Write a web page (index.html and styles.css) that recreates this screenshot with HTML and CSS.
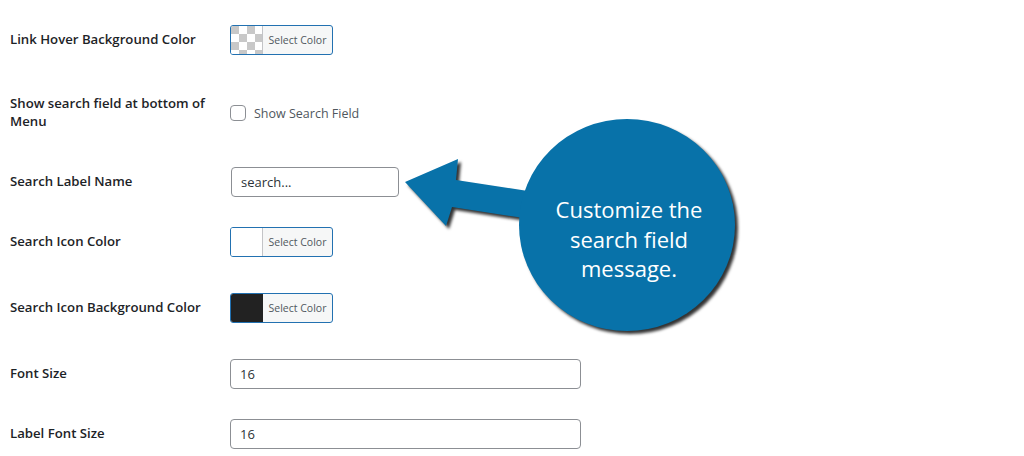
FILE: index.html
```
<!DOCTYPE html>
<html>
<head>
<meta charset="utf-8">
<title>Menu Settings</title>
<link rel="stylesheet" href="styles.css">
</head>
<body>
<div class="form">
  <div class="row color-row first">
    <div class="label">Link Hover Background Color</div>
    <button class="picker"><span class="swatch checker"></span><span class="pick-text">Select Color</span></button>
  </div>
  <div class="row">
    <div class="label">Show search field at bottom of Menu</div>
    <label class="check"><span class="box"></span>Show Search Field</label>
  </div>
  <div class="row text-row">
    <div class="label">Search Label Name</div>
    <div class="input short">search...</div>
  </div>
  <div class="row color-row">
    <div class="label">Search Icon Color</div>
    <button class="picker"><span class="swatch white"></span><span class="pick-text">Select Color</span></button>
  </div>
  <div class="row color-row">
    <div class="label">Search Icon Background Color</div>
    <button class="picker"><span class="swatch dark"></span><span class="pick-text">Select Color</span></button>
  </div>
  <div class="row text-row">
    <div class="label">Font Size</div>
    <div class="input wide">16</div>
  </div>
  <div class="row text-row last">
    <div class="label">Label Font Size</div>
    <div class="input wide">16</div>
  </div>
</div>

<!-- callout annotation drawn over the form -->
<svg class="callout" width="1024" height="456" viewBox="0 0 1024 456">
  <g class="shape">
    <path d="M405 182 L458 159 L456 180 L560 196 L556 223 L452 207 L446 226 Z"/>
    <ellipse cx="627" cy="225" rx="108" ry="106"/>
  </g>
  <text x="629" y="218">Customize the</text>
  <text x="629" y="248">search field</text>
  <text x="629" y="277">message.</text>
</svg>
</body>
</html>
```

FILE: styles.css
```
body {
  margin:0;
  background:#fff;
  font-family:'Open Sans', 'Noto Sans', sans-serif;
  color:#1d2327;
  position:relative;
  width:1024px;
  height:456px;
  overflow:hidden;
}

.form {
  display:flex;
  flex-direction:column;
  padding-top:25px;
}

.row {
  display:flex;
  align-items:center;
  margin-bottom:36px;
}

.row.first {
  margin-bottom:40px;
}

.row.text-row {
  margin-bottom:30px;
}

.row.last {
  margin-bottom:0;
}

.label {
  width:200px;
  margin:-1px 0 1px;
  padding:0 20px 0 10px;
  font-size:13.2px;
  font-weight:600;
  line-height:18px;
}

.picker {
  display:flex;
  height:30px;
  width:103px;
  padding:0;
  border:1px solid #2271b1;
  border-radius:3px;
  background:#f6f7f7;
  overflow:hidden;
  font-family:inherit;
}

.swatch {
  width:31px;
  height:100%;
  border-right:1px solid #c3c4c7;
}

.swatch.checker {
  background:repeating-conic-gradient(#fff 0 25%, #c8c8c8 0 50%) 0 0/16px 16px;
}

.swatch.white {
  background:#fff;
}

.swatch.dark {
  background:#222;
  border-right-color:#222;
}

.pick-text {
  flex:1;
  align-self:center;
  font-size:10.5px;
  color:#50575e;
  text-align:center;
}

.check {
  display:flex;
  align-items:center;
  gap:8px;
  font-size:12.5px;
  color:#50575e;
}

.box {
  width:14px;
  height:14px;
  border:1px solid #8c8f94;
  border-radius:4px;
  background:#fff;
}

.input {
  box-sizing:border-box;
  height:30px;
  padding:0 9px;
  border:1px solid #8c8f94;
  border-radius:4px;
  font-size:13px;
  line-height:28px;
  color:#2c3338;
}

.input.short {
  width:168px;
  margin-left:1px;
}

.input.wide {
  width:351px;
}

.callout {
  position:absolute;
  top:0;
  left:0;
  pointer-events:none;
}

.callout .shape {
  fill:#0872a9;
  filter:drop-shadow(3px 3px 1.5px rgba(0,0,0,.8));
}

.callout text {
  fill:#fff;
  font-family:'Open Sans', sans-serif;
  font-size:22px;
  text-anchor:middle;
}
```
